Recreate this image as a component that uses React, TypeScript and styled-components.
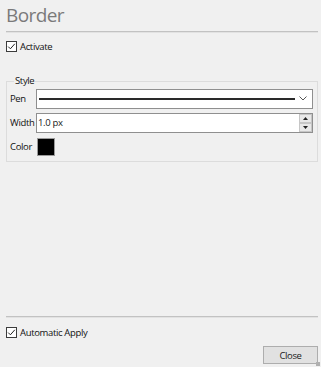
import * as React from 'react';
import styled, { createGlobalStyle } from 'styled-components';

const GlobalStyle = createGlobalStyle`
  html, body {
    margin: 0;
    padding: 0;
    background: #f0f0f0;
  }
  body {
    font-family: "Open Sans", "Noto Sans", sans-serif;
    font-size: 10px;
    color: #1a1a1a;
  }
`;

function CheckIcon(): React.ReactElement {
  return (
    <svg width="11" height="11" viewBox="0 0 11 11">
      <rect x="0.5" y="0.5" width="10" height="10" fill="#ffffff" stroke="#3c3c3c" />
      <path d="M2.2 5.6 L4.4 7.8 L8.8 2.8" fill="none" stroke="#222" strokeWidth="1" />
    </svg>
  );
}

function Chevron(): React.ReactElement {
  return (
    <svg width="8" height="5" viewBox="0 0 8 5">
      <path d="M0.5 0.5 L4 4 L7.5 0.5" fill="none" stroke="#555" strokeWidth="1" />
    </svg>
  );
}

function Arrow({ up }: { up: boolean }): React.ReactElement {
  return (
    <svg width="5" height="3" viewBox="0 0 5 3">
      <path d={up ? 'M0 3 L2.5 0 L5 3 Z' : 'M0 0 L2.5 3 L5 0 Z'} fill="#222" />
    </svg>
  );
}

function App(): React.ReactElement {
  return (
    <>
      <GlobalStyle />
      <StyledPage>
        <StyledTitle>Border</StyledTitle>
        <StyledRule />
        <StyledCheckRow top={8}>
          <CheckIcon />
          <span>Activate</span>
        </StyledCheckRow>

        <StyledGroup>
          <StyledLegend>Style</StyledLegend>
          <StyledFieldGrid>
            <StyledLabel>Pen</StyledLabel>
            <StyledCombo>
              <StyledPenLine />
              <StyledChevronBox>
                <Chevron />
              </StyledChevronBox>
            </StyledCombo>

            <StyledLabel>Width</StyledLabel>
            <StyledSpin>
              <StyledSpinText>1.0 px</StyledSpinText>
              <StyledSpinButtons>
                <StyledSpinButton>
                  <Arrow up />
                </StyledSpinButton>
                <StyledSpinButton>
                  <Arrow up={false} />
                </StyledSpinButton>
              </StyledSpinButtons>
            </StyledSpin>

            <StyledLabel>Color</StyledLabel>
            <StyledSwatch color="#000000" />
          </StyledFieldGrid>
        </StyledGroup>

        <StyledSpacer />

        <StyledRule />
        <StyledCheckRow top={9}>
          <CheckIcon />
          <span>Automatic Apply</span>
        </StyledCheckRow>

        <StyledFooter>
          <StyledButton>Close</StyledButton>
        </StyledFooter>
        <StyledGrip />
      </StyledPage>
    </>
  );
}

const StyledPage = styled.div`
  position: relative;
  box-sizing: border-box;
  display: flex;
  flex-direction: column;
  width: 321px;
  height: 367px;
  padding: 0 3px 0 6px;
  background: #f0f0f0;
  overflow: hidden;
`;

const StyledTitle = styled.div`
  margin-top: 2px;
  height: 29px;
  font-size: 19px;
  line-height: 26px;
  letter-spacing: -0.6px;
  color: #7a7a7a;
`;

const StyledRule = styled.div`
  height: 0;
  border-top: 1px solid #c2c2c2;
  border-bottom: 1px solid #e2e2e2;
`;

const StyledCheckRow = styled.div<{ top: number }>`
  display: flex;
  align-items: center;
  gap: 3px;
  margin-top: ${({ top }) => top}px;
  height: 11px;
  font-size: 9.5px;
  letter-spacing: -0.35px;
  line-height: 11px;
  color: #111;

  span {
    padding-bottom: 1px;
  }
`;

const StyledGroup = styled.fieldset`
  margin: 24px 0 0 0;
  padding: 3px 4px 3px 3px;
  height: 86px;
  box-sizing: border-box;
  border: 1px solid #dcdcdc;
  min-width: 0;
`;

const StyledLegend = styled.legend`
  padding: 0 1px;
  margin-left: 4px;
  font-size: 9.5px;
  letter-spacing: -0.35px;
  line-height: 10px;
  color: #111;
`;

const StyledFieldGrid = styled.div`
  display: grid;
  grid-template-columns: 26px 1fr;
  grid-auto-rows: 19px;
  row-gap: 5px;
  align-items: center;
`;

const StyledLabel = styled.div`
  font-size: 9.5px;
  letter-spacing: -0.35px;
  color: #111;
`;

const StyledCombo = styled.div`
  box-sizing: border-box;
  height: 20px;
  display: flex;
  align-items: center;
  padding: 0 3px 0 2px;
  background: #ffffff;
  border: 1px solid #8f8f8f;
`;

const StyledPenLine = styled.div`
  flex: 1;
  height: 2px;
  background: #2a2a2a;
`;

const StyledChevronBox = styled.div`
  display: flex;
  align-items: center;
  justify-content: center;
  width: 12px;
  margin-left: 2px;
`;

const StyledSpin = styled.div`
  box-sizing: border-box;
  height: 20px;
  display: flex;
  align-items: stretch;
  background: #ffffff;
  border: 1px solid #8f8f8f;
`;

const StyledSpinText = styled.div`
  flex: 1;
  display: flex;
  align-items: center;
  padding-left: 1px;
  font-size: 9.5px;
  letter-spacing: -0.35px;
`;

const StyledSpinButtons = styled.div`
  display: flex;
  flex-direction: column;
  width: 13px;
`;

const StyledSpinButton = styled.div`
  flex: 1;
  display: flex;
  align-items: center;
  justify-content: center;
  background: #e8e8e8;
  border: 1px solid #c6c6c6;
`;

const StyledSwatch = styled.div<{ color: string }>`
  box-sizing: border-box;
  width: 18px;
  height: 18px;
  margin-left: 1px;
  background: ${({ color }) => color};
  border: 1px solid #9a9a9a;
`;

const StyledSpacer = styled.div`
  flex: 1;
`;

const StyledFooter = styled.div`
  display: flex;
  justify-content: flex-end;
  margin-top: 8px;
  margin-bottom: 3px;
`;

const StyledButton = styled.button`
  box-sizing: border-box;
  width: 55px;
  height: 18px;
  padding: 0;
  font-family: "Open Sans", "Noto Sans", sans-serif;
  font-size: 9.5px;
  letter-spacing: -0.35px;
  color: #1a1a1a;
  background: #e1e1e1;
  border: 1px solid #adadad;
  border-radius: 0;
`;

const StyledGrip = styled.div`
  position: absolute;
  right: 1px;
  bottom: 1px;
  width: 4px;
  height: 4px;
  background-image: radial-gradient(circle, #b0b0b0 0.8px, transparent 1px);
  background-size: 2px 2px;
`;

export default App;
